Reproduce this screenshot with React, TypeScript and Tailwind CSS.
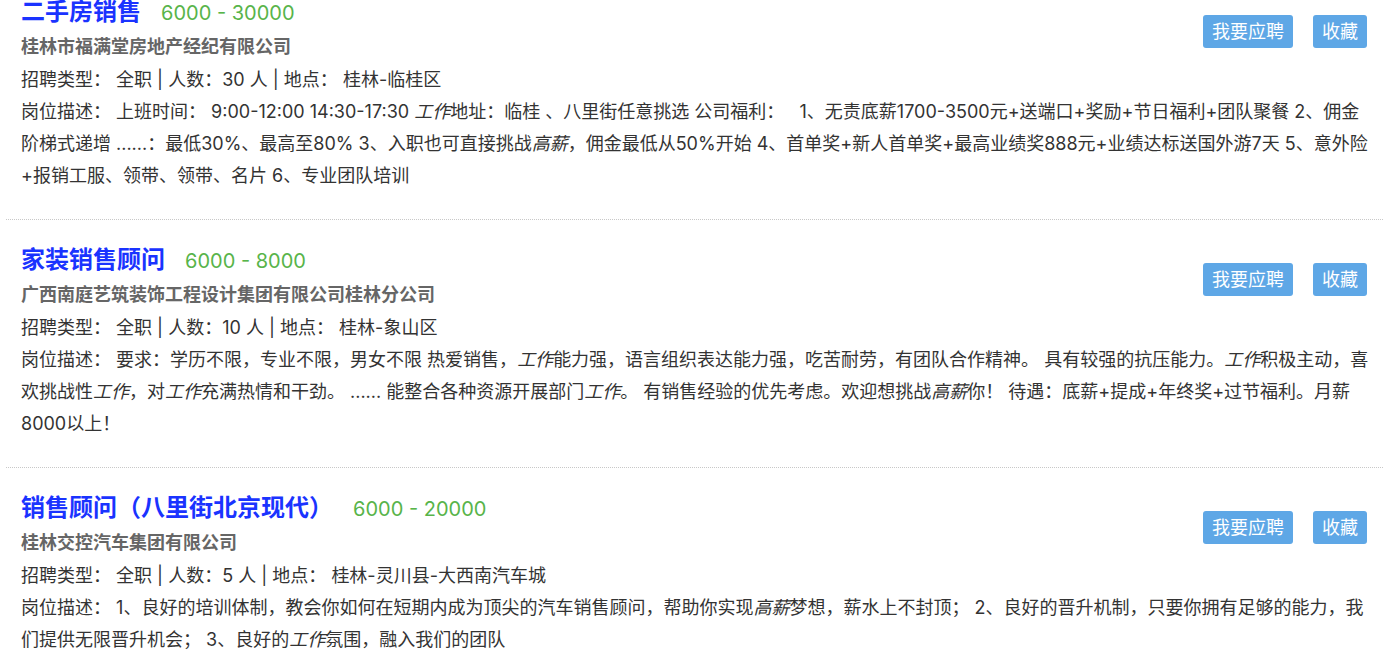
import React from "react";

type Job = {
  title: string;
  salary: string;
  company: string;
  count: string;
  place: string;
  desc: React.ReactNode;
};

const Em = ({ children }: { children: React.ReactNode }) => <i>{children}</i>;

const jobs: Job[] = [
  {
    title: "二手房销售",
    salary: "6000 - 30000",
    company: "桂林市福满堂房地产经纪有限公司",
    count: "30",
    place: "桂林-临桂区",
    desc: (
      <>
        上班时间： 9:00-12:00 14:30-17:30 <Em>工作</Em>地址：临桂 、八里街任意挑选 公司福利：{"\u00a0\u00a0"} 1、无责底薪1700-3500元+送端口+奖励+节日福利+团队聚餐 2、佣金阶梯式递增 ......：最低30%、最高至80% 3、入职也可直接挑战<Em>高薪</Em>，佣金最低从50%开始 4、首单奖+新人首单奖+最高业绩奖888元+业绩达标送国外游7天 5、意外险+报销工服、领带、领带、名片 6、专业团队培训
      </>
    ),
  },
  {
    title: "家装销售顾问",
    salary: "6000 - 8000",
    company: "广西南庭艺筑装饰工程设计集团有限公司桂林分公司",
    count: "10",
    place: "桂林-象山区",
    desc: (
      <>
        要求：学历不限，专业不限，男女不限 热爱销售，<Em>工作</Em>能力强，语言组织表达能力强，吃苦耐劳，有团队合作精神。 具有较强的抗压能力。<Em>工作</Em>积极主动，喜欢挑战性<Em>工作</Em>，对<Em>工作</Em>充满热情和干劲。 ...... 能整合各种资源开展部门<Em>工作</Em>。 有销售经验的优先考虑。欢迎想挑战<Em>高薪</Em>你！ 待遇：底薪+提成+年终奖+过节福利。月薪8000以上！
      </>
    ),
  },
  {
    title: "销售顾问（八里街北京现代）",
    salary: "6000 - 20000",
    company: "桂林交控汽车集团有限公司",
    count: "5",
    place: "桂林-灵川县-大西南汽车城",
    desc: (
      <>
        1、良好的培训体制，教会你如何在短期内成为顶尖的汽车销售顾问，帮助你实现<Em>高薪</Em>梦想，薪水上不封顶； 2、良好的晋升机制，只要你拥有足够的能力，我们提供无限晋升机会； 3、良好的<Em>工作</Em>氛围，融入我们的团队
      </>
    ),
  },
];

function JobItem({ job }: { job: Job }) {
  return (
    <div className="border-b border-dotted border-[#c8c8c8] pl-[15px] pr-[12px] pt-[21px] pb-[27px]">
      <div className="flex items-start justify-between">
        <div className="flex flex-col">
          <div className="flex items-baseline h-[38px] leading-[38px]">
            <span className="text-[24px] font-bold text-[#1a33ff]">{job.title}</span>
            <span className="ml-[20px] text-[20px] text-[#58b44a]">{job.salary}</span>
          </div>
          <div className="leading-[32px] font-bold text-[#666]">{job.company}</div>
          <div className="leading-[33px] text-[#333]">
            招聘类型： 全职 | 人数：{job.count} 人 | 地点： {job.place}
          </div>
        </div>
        <div className="mt-[22px] mr-[4px] flex gap-[20px] shrink-0">
          <button className="h-[33px] rounded-[3px] bg-[#5ea7e6] px-[9px] text-[18px] leading-[33px] text-white">
            我要应聘
          </button>
          <button className="h-[33px] rounded-[3px] bg-[#5ea7e6] px-[9px] text-[18px] leading-[33px] text-white">
            收藏
          </button>
        </div>
      </div>
      <div className="leading-[32px] text-[#333]">
        岗位描述： {job.desc}
      </div>
    </div>
  );
}

export default function App() {
  return (
    <div
      className="min-h-[665px] bg-white text-[18px] text-[#333]"
      style={{ fontFamily: '"Inter", "Noto Sans CJK SC", sans-serif' }}
    >
      <div className="ml-[6px] mr-[16px] -mt-[28px]">
        {jobs.map((j) => (
          <JobItem key={j.title} job={j} />
        ))}
      </div>
    </div>
  );
}
